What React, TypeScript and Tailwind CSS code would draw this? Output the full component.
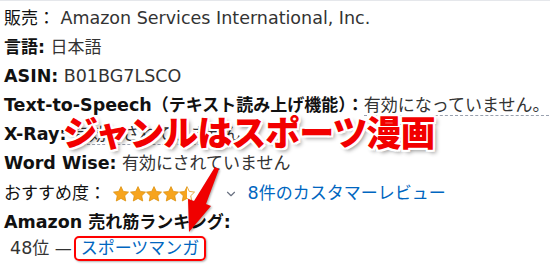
import { ReactNode } from "react";
import { ChevronDown } from "lucide-react";

const font = "font-['DejaVu_Sans','Noto_Sans_CJK_JP',sans-serif]";

// Latin runs render a touch wider than the Japanese ones in the reference
const L = ({ children }: { children: ReactNode }) => (
  <span className="text-[17.5px]">{children}</span>
);

const Star = ({ fill }: { fill: number }) => (
  <svg width="16" height="16" viewBox="1.5 1.5 21 21" className="mr-[0.5px]">
    <defs>
      <linearGradient id={`g${fill}`} x1="0" x2="1" y1="0" y2="0">
        <stop offset={`${fill * 100}%`} stopColor="#f7a41d" />
        <stop offset={`${fill * 100}%`} stopColor="#ffffff" />
      </linearGradient>
    </defs>
    <path
      d="M12 2.3l3 6.3 6.9.9-5 4.8 1.3 6.9L12 17.8l-6.2 3.4 1.3-6.9-5-4.8 6.9-.9z"
      fill={`url(#g${fill})`}
      stroke="#dc8f0c"
      strokeWidth="1"
      strokeLinejoin="round"
    />
  </svg>
);

export default function App() {
  return (
    <div
      className={`relative w-[550px] h-[275px] overflow-hidden bg-white border-t border-gray-200 text-[17px] text-[#333] ${font}`}
    >
      <div className="flex flex-col pl-[4px] pt-[3px] leading-[29px] whitespace-nowrap">
        <div>
          <span className="text-[#111]">販売：</span> <L>Amazon Services International, Inc.</L>
        </div>
        <div>
          <b className="text-[#111]">
            言語<L>:</L>
          </b>{" "}
          日本語
        </div>
        <div>
          <b className="text-[#111]">
            <L>ASIN:</L>
          </b>{" "}
          <L>B01BG7LSCO</L>
        </div>
        <div>
          <b className="text-[#111]">
            <L>Text-to-Speech</L>（テキスト読み上げ機能）：
          </b>
          <span className="border-b border-dashed border-gray-400">有効になっていません。</span>
        </div>
        <div>
          <b className="text-[#111]">
            <L>X-Ray:</L>
          </b>{" "}
          <span className="border-b border-dashed border-gray-400">有効にされていません</span>
        </div>
        <div>
          <b className="text-[#111]">
            <L>Word Wise:</L>
          </b>{" "}
          有効にされていません
        </div>
        <div className="flex items-center h-[31px]">
          <span className="text-[#111]">おすすめ度：</span>
          <span className="flex items-center ml-[7px]">
            <Star fill={1} />
            <Star fill={1} />
            <Star fill={1} />
            <Star fill={1} />
            <Star fill={0.5} />
          </span>
          <ChevronDown className="ml-[28px] w-[14px] h-[14px] text-gray-500" strokeWidth={2} />
          <span className="ml-[10px] text-[#0066c0]">
            <L>8</L>件のカスタマーレビュー
          </span>
        </div>
        <div className="h-[27px] leading-[27px]">
          <b className="text-[#111]">
            <L>Amazon</L> 売れ筋ランキング<L>:</L>
          </b>
        </div>
        <div className="flex items-center leading-[21px] pl-[6px]">
          <span>
            <L>48</L>位 —
          </span>
          <span className="ml-[2px] rounded-[5px] border-2 border-[#f00] px-[5px] text-[#0066c0] shadow-[1px_1px_2px_rgba(0,0,0,0.3)]">
            スポーツマンガ
          </span>
        </div>
      </div>

      <div
        className="absolute left-[63px] top-[108px] text-[35px] leading-[44px] font-black tracking-[-1px] text-[#f20000] font-['Noto_Sans_CJK_JP',sans-serif] [text-shadow:2px_0_0_#fff,-2px_0_0_#fff,0_2px_0_#fff,0_-2px_0_#fff,2px_2px_0_#fff,-2px_-2px_0_#fff,2px_-2px_0_#fff,-2px_2px_0_#fff,3px_3px_4px_rgba(0,0,0,0.45)]"
      >
        ジャンルはスポーツ漫画
      </div>

      <svg
        className="absolute left-[180px] top-[160px]"
        width="50"
        height="80"
        viewBox="0 0 50 80"
        style={{ filter: "drop-shadow(1px 1px 1px rgba(0,0,0,0.35))" }}
      >
        <path d="M35 6 L39 8 L26 43 L31 45 L9 71 L8 38 L14 40 Z" fill="#f00000" />
      </svg>
    </div>
  );
}
